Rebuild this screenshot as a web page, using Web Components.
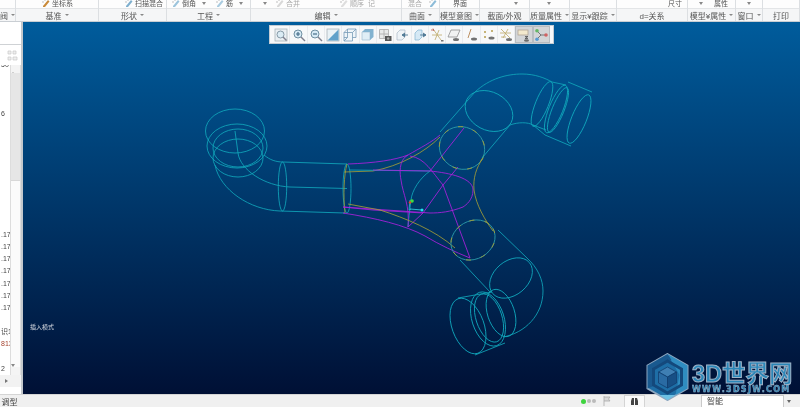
<!DOCTYPE html>
<html lang="zh">
<head>
<meta charset="utf-8">
<title>CAD</title>
<style>
  html, body { margin: 0; height: 100%; overflow: hidden; background: #f0f0f0; }
  body { font-family: "Liberation Sans", "Noto Sans CJK SC", sans-serif; }
  cad-app { height: 407px; }
</style>
</head>
<body>

<template id="tpl-app">
  <style>
    :host { display: grid; grid-template-rows: 22px 372px 13px; width: 800px; position: relative; overflow: hidden; }
    .mid { display: grid; grid-template-columns: 23px 777px; min-height: 0; }
  </style>
  <slot name="ribbon"></slot>
  <div class="mid"><slot name="panel"></slot><slot name="view"></slot></div>
  <slot name="status"></slot>
  <slot name="logo"></slot>
</template>

<template id="tpl-ribbon">
  <style>
    :host { display: flex; height: 22px; background: #f5f6f7; border-bottom: 1px solid #c9ced3; box-sizing: border-box; overflow: hidden; filter: blur(.4px); }
  </style>
  <slot></slot>
</template>

<template id="tpl-group">
  <style>
    :host { display: flex; flex-direction: column; flex: none; box-sizing: border-box; border-right: 1px solid #dcdfe2; font-size: 8px; color: #555; }
    .top { height: 9px; background: #fdfdfd; border-bottom: 1px solid #e3e5e7; box-sizing: border-box; overflow: hidden; display: flex; align-items: flex-end; white-space: nowrap; }
    .label { flex: 1; display: flex; align-items: center; justify-content: center; gap: 3px; white-space: nowrap; }
    .caret { width: 0; height: 0; border: 2px solid transparent; border-top: 2px solid #888; border-bottom: 0; }
  </style>
  <div class="top"><slot></slot></div>
  <div class="label"><span id="t"></span><span class="caret" id="c"></span></div>
</template>

<template id="tpl-item">
  <style>
    :host { display: flex; align-items: center; flex: none; height: 9px; font-size: 7px; line-height: 8px; color: #555; }
    .ico { width: 8px; height: 8px; margin-right: 2px; margin-top: -1px; display: block; }
    .arrow { width: 0; height: 0; border: 2px solid transparent; border-top: 3px solid #888; border-bottom: 0; }
  </style>
  <svg class="ico" id="i" viewBox="0 0 8 8"><path d="M1 7 6 1l1.500 1.500L3 8H1z" id="ip"/><path d="M0 3h2M3 0v2" stroke="#999" stroke-width=".6"/></svg><span id="t"></span><span class="arrow" id="a"></span>
</template>

<template id="tpl-panel">
  <style>
    :host { display: block; position: relative; background: #fff; border-right: 2px solid #c4c8cc; box-sizing: border-box; font-size: 7px; color: #444; overflow: hidden; filter: blur(.3px); }
    .head { height: 23px; border-bottom: 1px solid #cfd2d5; box-sizing: border-box; }
    .sub { height: 20px; display: flex; justify-content: flex-end; align-items: center; padding-right: 3px; }
    .sub svg { display: block; }
    .body { display: grid; grid-template-columns: 10px 11px; height: 310px; }
    .rows { overflow: hidden; white-space: nowrap; }
    .rows div { height: 12.15px; line-height: 12px; margin-left: 1px; }
    .rows div:first-child { margin-top: -6px; }
    .bar { display: grid; grid-template-rows: 8px 107px 1fr 8px; background: #f3f3f3; border-left: 1px solid #ddd; border-right: 1px solid #ddd; }
    .bar i { display: block; }
    .up, .dn { background: #f4f4f4; display: flex; align-items: center; justify-content: center; }
    .up::after { content: ""; border: 2px solid transparent; border-bottom: 3px solid #888; border-top: 0; }
    .dn::after { content: ""; border: 2px solid transparent; border-top: 3px solid #888; border-bottom: 0; }
    .track { background: #e6e6e6; }
    .thumb { background: #fbfbfb; border-top: 1px solid #d8d8d8; }
    .hbar { height: 12px; background: #f2f2f2; display: flex; justify-content: flex-end; padding-right: 13px; align-items: center; }
    .hbar::after { content: ""; border: 2px solid transparent; border-left: 3px solid #777; border-right: 0; }
    .red { color: #a5432f; }
  </style>
  <div class="head"></div>
  <div class="sub"><svg width="11" height="11" viewBox="0 0 11 11"><path d="M1 1h3v3H1zM1 7h3v3H1zM6 1h3v3H6zM6 7h4v3H6z" fill="#eee" stroke="#c8c8c8" stroke-width=".7"/></svg></div>
  <div class="body">
    <div class="rows" id="rows"></div>
    <div class="bar"><i class="up"></i><i class="track"></i><i class="thumb"></i><i class="dn"></i></div>
  </div>
  <div class="hbar"></div>
</template>

<template id="tpl-view">
  <style>
    :host { display: block; position: relative; overflow: hidden; background: linear-gradient(#005c9c, #001035); }
    .bar { display: flex; justify-content: center; padding: 3px 247px 0 247px; }
    .msg { position: absolute; left: 7px; top: 301px; font-size: 6px; line-height: 8px; color: #d8dde4; filter: blur(.25px); }
    ::slotted(wire-model) { position: absolute; inset: 0; }
  </style>
  <slot name="model"></slot>
  <div class="bar"><slot name="tools"></slot></div>
  <div class="msg">插入模式</div>
</template>

<template id="tpl-tools">
  <style>
    :host { display: flex; flex: none; position: relative; height: 19px; padding: 0 3px; background: #f7f8f9; border: 1px solid #c4ccd3; box-sizing: border-box; filter: blur(.3px); }
  </style>
  <slot></slot>
</template>

<template id="tpl-tool">
  <style>
    :host { display: flex; align-items: center; justify-content: center; width: 17.3px; height: 17px; box-sizing: border-box; border-right: 1px solid #e9ebee; }
    :host([on]) { background: #d3d5d7; border: 1px solid #b8bcc0; }
    ::slotted(svg) { width: 14px; height: 14px; display: block; opacity: .82; }
  </style>
  <slot></slot>
</template>

<template id="tpl-status">
  <style>
    :host { display: flex; align-items: center; height: 13px; background: #f0f0f0; border-top: 1px solid #d5d5d5; box-sizing: border-box; font-size: 8px; color: #444; position: relative; filter: blur(.25px); }
    .name { width: 581px; white-space: nowrap; overflow: hidden; }
    .dot { width: 5px; height: 5px; border-radius: 50%; background: #3fd43f; margin-right: 1px; }
    .dot.off { width: 4px; height: 4px; background: #bbb; margin-right: 1px; }
    .flag { margin: 0 13px 0 6px; width: 8px; height: 10px; display: block; }
    .btn { width: 21px; height: 12px; background: #fafafa; border: 1px solid #d4d4d4; border-bottom: 0; box-sizing: border-box; display: flex; align-items: center; justify-content: center; margin-right: 56px; }
    .sel { width: 83px; height: 12px; background: #fff; border: 1px solid #c9c9c9; border-bottom: 0; box-sizing: border-box; padding-left: 5px; line-height: 12px; }
    .arr { width: 7px; height: 12px; margin-left: 1px; display: flex; align-items: center; justify-content: center; }
    .arr::after { content: ""; border: 2px solid transparent; border-top: 3px solid #666; border-bottom: 0; }
  </style>
  <span class="name">&#8201;调型</span>
  <span class="dot"></span><span class="dot off"></span><span class="dot off"></span>
  <svg class="flag" viewBox="0 0 8 10"><path d="M1 0v10M1 1h6l-1.500 2L7 5H1" fill="#d8d8d8" stroke="#aaa" stroke-width=".8"/></svg>
  <span class="btn"><svg width="9" height="9" viewBox="0 0 9 9"><path d="M1 8V4l1-3h2v7zM8 8V4L7 1H5v7z" fill="#444"/></svg></span>
  <span class="sel">智能</span><span class="arr"></span>
</template>

<template id="tpl-logo">
  <style>
    :host { position: absolute; left: 645px; top: 353px; display: flex; align-items: center; gap: 2px; pointer-events: none; }
    .words { display: flex; flex-direction: column; align-items: flex-start; margin-top: 2px; filter: blur(.35px); }
    .big { font: bold 23.500px/24px "Liberation Sans", "Noto Sans CJK SC", sans-serif; color: #2a86b8; -webkit-text-stroke: 1px #9fb4c8; white-space: nowrap; }
    .small { font: bold 8px/8px "DejaVu Sans", sans-serif; color: #2a86b8; -webkit-text-stroke: .4px #a7bacb; letter-spacing: 1.300px; white-space: nowrap; }
    svg { filter: blur(.3px); }
  </style>
  <svg width="45" height="48" viewBox="0 0 44 48">
    <path d="M22 1 42 12.500V35.500L22 47 2 35.500V12.500Z" fill="#1e6ea6" stroke="#8da7c0" stroke-width="2"/>
    <path d="M22 1 42 12.500V35.500L30 42 34 22Z" fill="#2f8cc0"/>
    <path d="M2 12.500 22 1 26 7 9 16 8 33 2 35.500Z" fill="#19598f"/>
    <path d="M14 42 30 42 22 47Z" fill="#6ec1e4"/>
    <path d="M22 8 36 16V32L22 40 8 32V16Z" fill="none" stroke="#14497c" stroke-width="3"/>
    <path d="M22 14 31 19 22 24 13 19Z" fill="#3f7fb3" stroke="#123f70" stroke-width=".8"/>
    <path d="M13 19 22 24V35L13 30Z" fill="#2a6ba3" stroke="#123f70" stroke-width=".8"/>
    <path d="M31 19 22 24V35L31 30Z" fill="#174f85" stroke="#123f70" stroke-width=".8"/>
  </svg>
  <div class="words"><span class="big">3D世界网</span><span class="small">WWW.3DSJW.COM</span></div>
</template>

<template id="tpl-wire">
  <style>
    :host { display: block; }
    svg { display: block; width: 777px; height: 372px; }
    .c { fill: none; stroke: #10a6bb; stroke-width: .85; }
    .p { fill: none; stroke: #ab20de; stroke-width: .85; }
    .o { fill: none; stroke: #a09c38; stroke-width: .85; }
    .t { fill: none; stroke: #2a98a8; stroke-width: .85; }
    .d { fill: none; stroke: #a09c38; stroke-width: .85; stroke-dasharray: 5 10; }
  </style>
  <svg viewBox="23 22 777 372">
    <!-- left elbow -->
    <g class="c">
      <ellipse cx="235" cy="131" rx="29.500" ry="22"/>
      <ellipse cx="237" cy="146" rx="30" ry="22"/>
      <ellipse cx="238" cy="148" rx="25" ry="19"/>
      <ellipse cx="238" cy="158" rx="25" ry="19"/>
      <path d="M264 155C270 160 276 162 283 162L347 164"/>
      <path d="M215 165C220 190 250 210 280 211L345 213"/>
      <path d="M235 131L238 153C240 170 265 186 290 187L347 188.500"/>
      <ellipse cx="282.500" cy="186.500" rx="4.200" ry="24.500"/>
      <ellipse cx="347" cy="188.500" rx="4" ry="24.500"/>
    </g>
    <path class="o" d="M347 164C344 175 343 195 345 213"/>
    <!-- middle body -->
    <path class="p" d="M348 164C375 163 395 160 408 155C420 148 432 142 440 135"/>
    <path class="o" d="M344 172L373 171C400 166 425 152 440 137"/>
    <path class="c" d="M350 170L430 171C420 178 412 190 411 200C410 208 409 215 408 227"/>
    <path class="p" d="M373 170L430 171C450 173 473 178 473 190C473 200 466 205 463 207C450 212 440 213 430 213L343 207"/>
    <path class="p" d="M408 155C398 160 400 175 401 180C403 195 410 205 408 227"/>
    <path class="p" d="M410 156C425 158 432 172 443 185L470 258"/>
    <path class="p" d="M464 128L430 171"/>
    <path class="p" d="M458 167L443 185L423 213L408 227"/>
    <path class="p" d="M343 213C375 218 405 225 425 236C440 245 455 252 470 258"/>
    <path class="p" d="M343 207L373 210L423 213"/>
    <path class="o" d="M348 204L380 210C405 218 435 230 455 248"/>
    <ellipse class="t" cx="462" cy="148" rx="23" ry="21" transform="rotate(25 462 148)"/>
    <ellipse class="d" cx="462" cy="148" rx="23" ry="21" transform="rotate(25 462 148)"/>
    <ellipse class="t" cx="473" cy="240" rx="23" ry="19" transform="rotate(-30 473 240)"/>
    <ellipse class="d" cx="473" cy="240" rx="23" ry="19" transform="rotate(-30 473 240)"/>
    <path class="o" d="M483 158C476 168 473 178 474 190C476 205 485 220 493 231"/>
    <!-- top right elbow -->
    <g class="c">
      <path d="M475 92L440 132"/>
      <path d="M510 125L482 158"/>
      <path d="M475 92C490 78 508 74 522 74C535 74 545 78 552 82"/>
      <path d="M510 125C518 122 528 122 533 125L545 135"/>
      <ellipse cx="489" cy="111" rx="25" ry="19" transform="rotate(28 489 111)"/>
      <ellipse cx="542" cy="104" rx="24" ry="6.500" transform="rotate(-68 542 104)"/>
      <ellipse cx="556" cy="109" rx="25.500" ry="7" transform="rotate(-68 556 109)"/>
      <ellipse cx="558" cy="110" rx="24" ry="6" transform="rotate(-68 558 110)"/>
      <ellipse cx="579" cy="119" rx="26" ry="7.500" transform="rotate(-68 579 119)"/>
      <path d="M552 82L566 85M568 82L592 92M545 135L571 146M533 125L546 130"/>
    </g>
    <!-- lower elbow -->
    <g class="c">
      <path d="M498 230L527 258"/>
      <path d="M460 260L490 292"/>
      <path d="M527 258C538 268 543 280 543 291C543 315 525 333 503 337"/>
      <ellipse cx="511" cy="278" rx="24" ry="17" transform="rotate(-40 511 278)"/>
      <ellipse cx="468" cy="326" rx="29" ry="16" transform="rotate(70 468 326)"/>
      <ellipse cx="488" cy="319" rx="28" ry="16" transform="rotate(72 488 319)"/>
      <ellipse cx="489" cy="318" rx="25" ry="13" transform="rotate(72 489 318)"/>
      <ellipse cx="501" cy="313" rx="24.500" ry="13.500" transform="rotate(72 501 313)"/>
      <path d="M458 298L492 292M475 355L505 343"/>
    </g>
    <!-- csys -->
    <path d="M411 209L409 210L410 200" stroke="#2fa8c8" fill="none" stroke-width=".9"/>
    <path d="M410 209L422 210" stroke="#2fc8d8" stroke-width=".9"/>
    <circle cx="422" cy="210" r="1.500" fill="#22e0f0"/>
    <circle cx="412" cy="201" r="1.800" fill="#3fe03f"/>
    <circle cx="410" cy="202.500" r="1.200" fill="#e04a2a"/>
  </svg>
</template>

<cad-app>
  <cad-ribbon slot="ribbon">
    <ribbon-group w="16" label="阀"></ribbon-group>
    <ribbon-group w="83" label="基准"><rib-item m="26" icon="#c98a3a" text="坐标系"></rib-item></ribbon-group>
    <ribbon-group w="68" label="形状"><rib-item m="26" icon="#7fb0cf" text="扫描混合"></rib-item></ribbon-group>
    <ribbon-group w="84" label="工程">
      <rib-item m="5" icon="#9cc4dc" text="倒角" arrow></rib-item>
      <rib-item m="10" icon="#a9cbe0" text="筋" arrow></rib-item>
    </ribbon-group>
    <ribbon-group w="151" label="编辑">
      <rib-item m="12" arrow></rib-item>
      <rib-item m="9" icon="#d8d8d8" text="合并" dim></rib-item>
      <rib-item m="40" icon="#dedede" text="顺序" dim></rib-item>
      <rib-item m="4" text="记" dim></rib-item>
    </ribbon-group>
    <ribbon-group w="38" label="曲面">
      <rib-item m="6" text="混合" dim></rib-item>
      <rib-item m="7" icon="#8dbcd8"></rib-item>
    </ribbon-group>
    <ribbon-group w="40" label="模型意图"><rib-item m="13" text="界面"></rib-item></ribbon-group>
    <ribbon-group w="50" label="截面/外观" nocaret><rib-item m="34" arrow></rib-item></ribbon-group>
    <ribbon-group w="40" label="质量属性"><rib-item m="17" arrow></rib-item></ribbon-group>
    <ribbon-group w="47" label="显示¥跟踪"></ribbon-group>
    <ribbon-group w="71" label="d=关系" nocaret><rib-item m="51" text="尺寸"></rib-item></ribbon-group>
    <ribbon-group w="48" label="模型¥属性">
      <rib-item m="11" arrow></rib-item>
      <rib-item m="11" text="属性"></rib-item>
    </ribbon-group>
    <ribbon-group w="27" label="窗口"><rib-item m="11" arrow></rib-item></ribbon-group>
    <ribbon-group w="37" label="打印" nocaret></ribbon-group>
  </cad-ribbon>

  <cad-panel slot="panel"></cad-panel>

  <cad-view slot="view">
    <wire-model slot="model"></wire-model>
    <view-tools slot="tools">
      <tool-button><svg viewBox="0 0 14 14"><rect x="1" y="1" width="12" height="12" fill="#e8eef2" stroke="#9aa5ad" stroke-width=".8"/><circle cx="6.500" cy="6.500" r="3.500" fill="#d6eaf5" stroke="#6f8796"/><path d="M9 9l3.500 3.500" stroke="#667" stroke-width="1.400"/></svg></tool-button>
      <tool-button><svg viewBox="0 0 14 14"><circle cx="6" cy="6" r="4" fill="#cfe6f3" stroke="#52788f"/><path d="M4 6h4M6 4v4" stroke="#1f4f70" stroke-width="1.200"/><path d="M9 9l4 4" stroke="#667" stroke-width="1.500"/></svg></tool-button>
      <tool-button><svg viewBox="0 0 14 14"><circle cx="6" cy="6" r="4" fill="#cfe6f3" stroke="#52788f"/><path d="M4 6h4" stroke="#1f4f70" stroke-width="1.200"/><path d="M9 9l4 4" stroke="#667" stroke-width="1.500"/></svg></tool-button>
      <tool-button><svg viewBox="0 0 14 14"><rect x="1" y="1" width="12" height="12" fill="#e8f1f6" stroke="#9aa5ad" stroke-width=".8"/><path d="M1.500 12.500 12.500 1.500V12.500Z" fill="#3f8fc0"/></svg></tool-button>
      <tool-button><svg viewBox="0 0 14 14"><path d="M1 4.500h8.500v8.500H1zM4.500 1H13v8.500H9.500M1 4.500 4.500 1M9.500 4.500 13 1M4.500 1v8.500H1M1 13l3.500-3.500" fill="#e6f1f8" fill-opacity=".6" stroke="#5b87a8" stroke-width=".8"/></svg></tool-button>
      <tool-button><svg viewBox="0 0 14 14"><path d="M1 4h8v8H1z" fill="#dcecf6" stroke="#8fb2c8" stroke-width=".7"/><path d="M1 4 4 1h8.500L9 4zM9 4l3.500-3v8L9 12z" fill="#6aa4c8"/></svg></tool-button>
      <tool-button><svg viewBox="0 0 14 14"><path d="M1.500 1.500h9v9h-9zM1.500 6h9M6 1.500v9" fill="#e7e7e7" stroke="#999" stroke-width=".8"/><rect x="7" y="8" width="6.500" height="5" fill="#333"/><circle cx="10.200" cy="10.500" r="1.300" fill="#999"/></svg></tool-button>
      <tool-button><svg viewBox="0 0 14 14"><path d="M2 5 5 2h5v7l-3 3H2z" fill="#edf3f7" stroke="#9ab" stroke-width=".7"/><path d="M7 7h6M10 5l-3 2 3 2" fill="#2d5f80" stroke="#2d5f80" stroke-width=".9"/></svg></tool-button>
      <tool-button><svg viewBox="0 0 14 14"><path d="M2 5 5 2h4v7l-3 3H2z" fill="#cfe6f5" stroke="#6ba5c8" stroke-width=".7"/><path d="M7 7h6M10 5l3 2-3 2" fill="#2d5f80" stroke="#2d5f80" stroke-width=".9"/></svg></tool-button>
      <tool-button><svg viewBox="0 0 14 14"><path d="M3 1 11 12M9 2 5 12M2 7h10" stroke="#b39a4a" stroke-width=".8" fill="none"/><path d="M1 2h3M3 .5 4 3" stroke="#b04030" stroke-width=".8"/><path d="M11 12h2.500v1.500H11z" fill="#555"/></svg></tool-button>
      <tool-button><svg viewBox="0 0 14 14"><path d="M4 2h9l-3 7H1z" fill="#f2f2f2" stroke="#777" stroke-width=".8"/><ellipse cx="9" cy="11.500" rx="3" ry="1.500" fill="#555"/></svg></tool-button>
      <tool-button><svg viewBox="0 0 14 14"><path d="M6 1 3 10" stroke="#b07a40" stroke-width="1"/><ellipse cx="9" cy="11" rx="3" ry="1.500" fill="#555"/></svg></tool-button>
      <tool-button><svg viewBox="0 0 14 14"><path d="M2 3l2 2M4 3 2 5M9 2l2 2M11 2 9 4M2 8l2 2M4 8l-2 2" stroke="#b39a4a" stroke-width=".9"/><ellipse cx="9.500" cy="10" rx="3" ry="1.500" fill="#555"/></svg></tool-button>
      <tool-button><svg viewBox="0 0 14 14"><path d="M2 1 11 10M9 1 4 10M1 5h11M2 9h5" stroke="#b39a4a" stroke-width=".8" fill="none"/><ellipse cx="10" cy="11.500" rx="3" ry="1.500" fill="#555"/></svg></tool-button>
      <tool-button on><svg viewBox="0 0 14 14"><rect x="1" y="2" width="10" height="5" fill="#fbeecb" stroke="#a98" stroke-width=".8"/><path d="M8 8.500h3L8 10.500h3" stroke="#333" fill="none" stroke-width=".8"/><ellipse cx="9.500" cy="12.500" rx="2.500" ry="1.200" fill="#555"/></svg></tool-button>
      <tool-button on><svg viewBox="0 0 14 14"><path d="M3 3 7 7 3 11M7 7h5" stroke="#555" fill="none" stroke-width=".9"/><circle cx="3" cy="2.800" r="1.800" fill="#4bb04b"/><circle cx="3" cy="11.200" r="1.800" fill="#3f8fd0"/><circle cx="12" cy="7" r="1.800" fill="#d04a4a"/></svg></tool-button>
    </view-tools>
  </cad-view>

  <cad-status slot="status"></cad-status>
  <logo-mark slot="logo"></logo-mark>
</cad-app>

<script>
  // small helper, every element is just template + open shadow root
  function shadow(el, id) {
    const root = el.attachShadow({ mode: "open" });
    root.appendChild(document.getElementById(id).content.cloneNode(true));
    return root;
  }

  class Plain extends HTMLElement {
    constructor() {
      super();
      shadow(this, this.constructor.tpl);
    }
  }

  class CadApp extends Plain { static tpl = "tpl-app"; }
  class CadRibbon extends Plain { static tpl = "tpl-ribbon"; }
  class CadView extends Plain { static tpl = "tpl-view"; }
  class ViewTools extends Plain { static tpl = "tpl-tools"; }
  class ToolButton extends Plain { static tpl = "tpl-tool"; }
  class CadStatus extends Plain { static tpl = "tpl-status"; }
  class LogoMark extends Plain { static tpl = "tpl-logo"; }
  class WireModel extends Plain { static tpl = "tpl-wire"; }

  class RibbonGroup extends HTMLElement {
    connectedCallback() {
      const root = shadow(this, "tpl-group");
      this.style.width = this.getAttribute("w") + "px";
      root.getElementById("t").textContent = this.getAttribute("label");
      if (this.hasAttribute("nocaret")) root.getElementById("c").remove();
    }
  }

  // one cropped command of the ribbon's upper row
  class RibItem extends HTMLElement {
    connectedCallback() {
      const root = shadow(this, "tpl-item");
      this.style.marginLeft = (this.getAttribute("m") || 0) + "px";
      const icon = this.getAttribute("icon");
      if (icon) root.getElementById("ip").setAttribute("fill", icon);
      else root.getElementById("i").remove();
      root.getElementById("t").textContent = this.getAttribute("text") || "";
      if (this.hasAttribute("dim")) this.style.color = "#a8a8a8";
      if (this.hasAttribute("arrow")) {
        if (this.getAttribute("text")) root.getElementById("a").style.marginLeft = "6px";
      } else {
        root.getElementById("a").remove();
      }
    }
  }

  class CadPanel extends HTMLElement {
    constructor() {
      super();
      const root = shadow(this, "tpl-panel");
      // only the clipped right edge of the tree shows at this width
      const rows = { 0: "50", 4: "6", 14: ".170", 15: ".170", 16: ".171", 17: ".172", 18: ".174", 19: ".174", 20: ".175", 22: "识17", 23: "813", 25: "2" };
      const box = root.getElementById("rows");
      for (let i = 0; i < 26; i++) {
        const d = document.createElement("div");
        d.textContent = rows[i] || "";
        if (i === 23) d.className = "red";
        box.appendChild(d);
      }
    }
  }

  customElements.define("cad-app", CadApp);
  customElements.define("cad-ribbon", CadRibbon);
  customElements.define("ribbon-group", RibbonGroup);
  customElements.define("rib-item", RibItem);
  customElements.define("cad-panel", CadPanel);
  customElements.define("cad-view", CadView);
  customElements.define("view-tools", ViewTools);
  customElements.define("tool-button", ToolButton);
  customElements.define("wire-model", WireModel);
  customElements.define("cad-status", CadStatus);
  customElements.define("logo-mark", LogoMark);
</script>
</body>
</html>
